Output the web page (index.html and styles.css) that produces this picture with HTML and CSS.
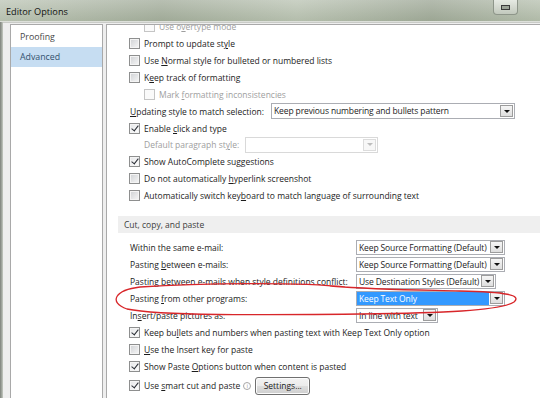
FILE: index.html
```html
<!DOCTYPE html>
<html lang="en">
<head>
  <meta charset="UTF-8">
  <title>Editor Options</title>
  <link rel="stylesheet" href="styles.css">
</head>
<body>
  <div class="window">
    <div class="titlebar">
      <span class="title">Editor Options</span>
      <span class="tb-btn"><span class="tb-icon"></span></span>
    </div>

    <div class="client">
      <nav class="nav">
        <div class="nav-item">Proofing</div>
        <div class="nav-item active">Advanced</div>
      </nav>

      <div class="content">
        <div class="list top-list">
          <div class="row indent disabled"><span class="cb"></span><span>Use o<u>v</u>ertype mode</span></div>
          <div class="row"><span class="cb"></span><span>Prompt to update st<u>y</u>le</span></div>
          <div class="row"><span class="cb"></span><span>Use <u>N</u>ormal style for bulleted or numbered lists</span></div>
          <div class="row"><span class="cb"></span><span>K<u>e</u>ep track of formatting</span></div>
          <div class="row indent disabled"><span class="cb"></span><span>Mark <u>f</u>ormatting inconsistencies</span></div>
          <div class="row plain">
            <span class="label w-update"><u>U</u>pdating style to match selection:</span>
            <span class="select w-244"><span class="val">Keep previous numbering and bullets pattern</span><span class="arrow"></span></span>
          </div>
          <div class="row"><span class="cb on"></span><span>Enable <u>c</u>lick and type</span></div>
          <div class="row plain indent-label disabled">
            <span class="label w-default">Default paragraph st<u>y</u>le:</span>
            <span class="select w-133 off"><span class="val"></span><span class="arrow"></span></span>
          </div>
          <div class="row"><span class="cb on"></span><span>Show AutoComplete suggestions</span></div>
          <div class="row"><span class="cb"></span><span>Do not automatically <u>h</u>yperlink screenshot</span></div>
          <div class="row"><span class="cb"></span><span>Automatically switch key<u>b</u>oard to match language of surrounding text</span></div>
        </div>

        <div class="section">Cut, copy, and paste</div>

        <div class="list paste-list">
          <div class="row plain">
            <span class="label w-paste">Within the same e-mail:</span>
            <span class="select w-149"><span class="val">Keep Source Formatting (Default)</span><span class="arrow"></span></span>
          </div>
          <div class="row plain">
            <span class="label w-paste">Pasting <u>b</u>etween e-mails:</span>
            <span class="select w-149"><span class="val">Keep Source Formatting (Default)</span><span class="arrow"></span></span>
          </div>
          <div class="row plain">
            <span class="label w-paste">Pasting between e-mails when style definitions conflict:</span>
            <span class="select w-140"><span class="val">Use Destination Styles (Default)</span><span class="arrow"></span></span>
          </div>
          <div class="row plain">
            <span class="label w-paste">Pasting <u>f</u>rom other programs:</span>
            <span class="select w-149 picked"><span class="val">Keep Text Only</span><span class="arrow"></span></span>
          </div>
          <div class="row plain">
            <span class="label w-paste">In<u>s</u>ert/paste pictures as:</span>
            <span class="select w-82"><span class="val">In line with text</span><span class="arrow"></span></span>
          </div>
          <div class="row"><span class="cb on"></span><span>Keep bu<u>l</u>lets and numbers when pasting text with Keep Text Only option</span></div>
          <div class="row"><span class="cb"></span><span><u>U</u>se the Insert key for paste</span></div>
          <div class="row"><span class="cb on"></span><span>Show Paste <u>O</u>ptions button when content is pasted</span></div>
          <div class="row tall">
            <span class="cb on"></span><span>Use <u>s</u>mart cut and paste</span>
            <span class="info">i</span>
            <span class="button">Settings...</span>
          </div>
        </div>
      </div>
    </div>

    <svg class="mark" width="540" height="398" viewBox="0 0 540 398">
      <path d="M 345 287 C 300 282, 200 283, 140 287 C 115 290, 108 302, 127 309 C 160 316, 260 315, 360 314 C 440 313, 500 311, 514 302 C 522 295, 506 292, 460 291 C 420 290, 380 290, 330 286"
            fill="none" stroke="#d8262a" stroke-width="1.3" stroke-linecap="round"/>
    </svg>
  </div>
</body>
</html>
```

FILE: styles.css
```css
* {
  margin: 0;
  padding: 0;
  box-sizing: border-box;
}

body {
  font-family: 'Open Sans', 'Noto Sans', sans-serif;
  font-size: 8.5px;
  color: #1c1c1c;
  background: #f0f0f0;
}

u {
  text-decoration: underline;
  text-underline-offset: 1px;
}

.window {
  position: relative;
  width: 540px;
  height: 398px;
  overflow: hidden;
  background: linear-gradient(90deg, #7d827b, #a9aea6 2px, #c8cdc4 3px);
}

.titlebar {
  height: 22px;
  display: flex;
  align-items: center;
  justify-content: space-between;
  padding: 0 22px 0 6px;
  background:
    linear-gradient(90deg, rgba(255, 255, 255, 0.15), rgba(0, 0, 0, 0.06) 30%, rgba(255, 255, 255, 0.12) 55%, rgba(0, 0, 0, 0.08) 80%, rgba(255, 255, 255, 0.08)),
    linear-gradient(180deg, #c3cbbd, #a9b4a0);
  border-bottom: 1px solid #dde0da;
}

.title {
  font-size: 9.2px;
  color: #111;
  padding-top: 1px;
}

.tb-btn {
  align-self: flex-start;
  width: 25px;
  height: 15px;
  border: 1px solid #8e968a;
  border-top: none;
  border-radius: 0 0 4px 4px;
  background: linear-gradient(180deg, #e6eae3, #c2c9bd);
  display: flex;
  align-items: center;
  justify-content: center;
}

.tb-icon {
  width: 9px;
  height: 5px;
  border: 1px solid #3a3a3a;
  background: #9aa296;
}

.client {
  margin-left: 3px;
  height: 376px;
  background: #eeeeee;
  border-top: 1px solid #c9cbc7;
  display: flex;
  gap: 3px;
  padding: 1px 0 0 7px;
}

.nav {
  width: 93px;
  background: #fff;
  border: 1px solid #a9a9a9;
  border-bottom: none;
  padding-top: 2px;
  color: #474747;
  font-size: 8.8px;
}

.nav-item {
  height: 20px;
  line-height: 20px;
  padding-left: 9px;
}

.nav-item.active {
  background: #c6ddf2;
  color: #33506e;
}

.content {
  flex: 1;
  background: #fff;
  border-left: 1px solid #a9a9a9;
  border-top: 1px solid #a9a9a9;
  overflow: hidden;
}

.top-list {
  margin-top: -6.5px;
}

.row {
  height: 16.86px;
  display: flex;
  align-items: center;
  gap: 4px;
  padding-left: 22px;
  white-space: nowrap;
}

.row.indent {
  padding-left: 37px;
}

.row.plain {
  padding-left: 23px;
  gap: 0;
}

.row.indent-label {
  padding-left: 37px;
}

.disabled {
  color: #9e9e9e;
}

.label {
  flex: none;
}

.w-update { width: 141px; }
.w-default { width: 101px; }
.w-paste { width: 226px; }

.cb {
  position: relative;
  flex: none;
  width: 11px;
  height: 11px;
  border: 1px solid #8e8f8f;
  background: linear-gradient(135deg, #cfd1d4, #f7f7f7);
  box-shadow: inset 0 0 0 1px #f4f4f4;
}

.disabled .cb {
  border-color: #c5c5c5;
  background: #fafafa;
  box-shadow: none;
}

.cb.on {
  background: linear-gradient(135deg, #e4e5e7, #ffffff);
}

.cb.on::after {
  content: '';
  position: absolute;
  left: 3px;
  top: 0;
  width: 3px;
  height: 6px;
  border: solid #2b2f36;
  border-width: 0 1.7px 1.7px 0;
  transform: rotate(38deg);
}

.select {
  flex: none;
  height: 15px;
  display: flex;
  align-items: center;
  border: 1px solid #abadb3;
  background: #fff;
  padding: 0 1px 0 0;
}

.w-244 { width: 244px; height: 16px; }
.w-133 { width: 133px; height: 16px; }
.w-149 { width: 149px; }
.w-140 { width: 140px; }
.w-82 { width: 82px; }

.select .val {
  flex: 1;
  height: 100%;
  line-height: 13px;
  padding-left: 2px;
  overflow: hidden;
  white-space: nowrap;
  letter-spacing: -0.12px;
}

.select.picked .val {
  background: #3399ff;
  color: #fff;
}

.select .arrow {
  flex: none;
  width: 13px;
  height: 12px;
  margin-left: 1px;
  border: 1px solid #9c9c9c;
  background: linear-gradient(180deg, #f6f6f6, #dedede);
  display: flex;
  align-items: center;
  justify-content: center;
}

.select .arrow::before {
  content: '';
  border-left: 3px solid transparent;
  border-right: 3px solid transparent;
  border-top: 3px solid #111;
}

.select.off {
  border-color: #d9d9d9;
}

.select.off .arrow {
  border-color: #dcdcdc;
  background: #f7f7f7;
}

.select.off .arrow::before {
  border-top-color: #bdbdbd;
}

.section {
  margin: 12px 0 0 11px;
  height: 17px;
  line-height: 17px;
  padding-left: 6px;
  background: #efefef;
  color: #3c3c3c;
}

.paste-list {
  margin-top: 6px;
}

.paste-list .row {
  height: 17px;
}

.paste-list .row.tall {
  height: 20px;
  margin-top: 1px;
}

.info {
  flex: none;
  width: 8px;
  height: 8px;
  margin-left: -1px;
  border: 1px solid #a7a7a7;
  border-radius: 50%;
  color: #9a9a9a;
  font-size: 6px;
  line-height: 6px;
  text-align: center;
}

.button {
  flex: none;
  margin-left: 0;
  width: 55px;
  height: 18px;
  line-height: 16px;
  text-align: center;
  border: 1px solid #707070;
  border-radius: 3px;
  background: linear-gradient(180deg, #f3f3f3 0%, #ebebeb 50%, #dddddd 51%, #cfcfcf 100%);
  box-shadow: inset 0 0 0 1px #fcfcfc;
}

.mark {
  position: absolute;
  left: 0;
  top: 0;
  pointer-events: none;
}
```
